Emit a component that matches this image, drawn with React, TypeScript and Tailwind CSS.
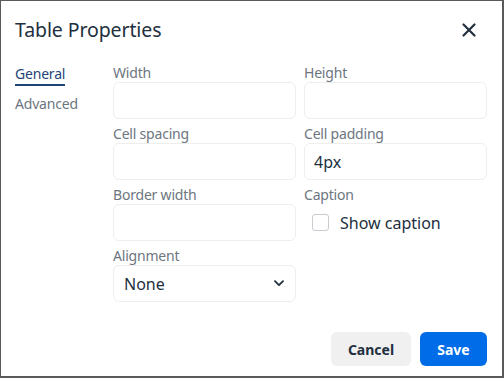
import React from "react";

const font = { fontFamily: '"Segoe UI", "Noto Sans", "Open Sans", Lato, sans-serif' };

function Field({ label, value }: { label: string; value?: string }) {
  return (
    <div className="flex flex-col">
      <div className="h-[19px] text-[14px] leading-[19px] tracking-[-0.2px] text-[#6d7680]">{label}</div>
      <div className="h-[37px] rounded-[6px] border border-[#eeeeee] bg-white flex items-center px-[9px] text-[16px] text-[#222f3e]">
        {value}
      </div>
    </div>
  );
}

export default function App() {
  return (
    <div
      style={font}
      className="w-[504px] h-[378px] bg-white border-l border-t border-[#5a5a5a] border-r-2 border-b-2 flex flex-col text-[#222f3e] overflow-hidden"
    >
      <div className="h-[62px] flex items-center justify-between pl-[14px] pr-[25px]">
        <div className="text-[19.5px] leading-[26px] tracking-[-0.1px] text-[#222f3e] pb-[4px]">Table Properties</div>
        <svg width="16" height="16" viewBox="0 0 16 16" className="mb-[5px]">
          <path d="M2.5 2.5 L13.5 13.5 M13.5 2.5 L2.5 13.5" stroke="#222f3e" strokeWidth="2.2" strokeLinecap="round" />
        </svg>
      </div>
      <div className="flex pl-[14px] pr-[15px]">
        <div className="w-[98px] flex flex-col pt-[1px]">
          <div className="self-start text-[14px] leading-[19px] tracking-[-0.2px] text-[#1f4476] border-b-2 border-[#1f4476] pb-[1px]">General</div>
          <div className="self-start text-[14px] leading-[19px] tracking-[-0.2px] text-[#6d7680] mt-[8px]">Advanced</div>
        </div>
        <div className="grid grid-cols-2 gap-x-[8px] gap-y-[5px] w-[374px]">
          <Field label="Width" />
          <Field label="Height" />
          <Field label="Cell spacing" />
          <Field label="Cell padding" value="4px" />
          <Field label="Border width" />
          <div className="flex flex-col">
            <div className="h-[19px] text-[14px] leading-[19px] tracking-[-0.2px] text-[#6d7680]">Caption</div>
            <div className="h-[37px] flex items-center pl-[8px]">
              <div className="w-[17px] h-[17px] rounded-[3px] border border-[#c8cbcf] bg-white" />
              <span className="ml-[11px] text-[16px] text-[#222f3e]">Show caption</span>
            </div>
          </div>
          <div className="flex flex-col">
            <div className="h-[19px] text-[14px] leading-[19px] tracking-[-0.2px] text-[#6d7680]">Alignment</div>
            <div className="h-[37px] rounded-[6px] border border-[#eeeeee] bg-white flex items-center justify-between pl-[10px] pr-[11px] text-[16px] text-[#222f3e]">
              <span>None</span>
              <svg width="10" height="7" viewBox="0 0 10 7">
                <path d="M1 1.2 L5 5.2 L9 1.2" stroke="#222f3e" strokeWidth="1.8" fill="none" strokeLinecap="round" strokeLinejoin="round" />
              </svg>
            </div>
          </div>
        </div>
      </div>
      <div className="flex-1" />
      <div className="flex justify-end gap-[9px] pr-[15px] pb-[10px]">
        <button className="w-[80px] h-[34px] rounded-[6px] bg-[#f0f0f0] text-[14px] font-bold text-[#222f3e]">Cancel</button>
        <button className="w-[67px] h-[34px] rounded-[6px] bg-[#006ce7] text-[14px] font-bold text-white">Save</button>
      </div>
    </div>
  );
}
